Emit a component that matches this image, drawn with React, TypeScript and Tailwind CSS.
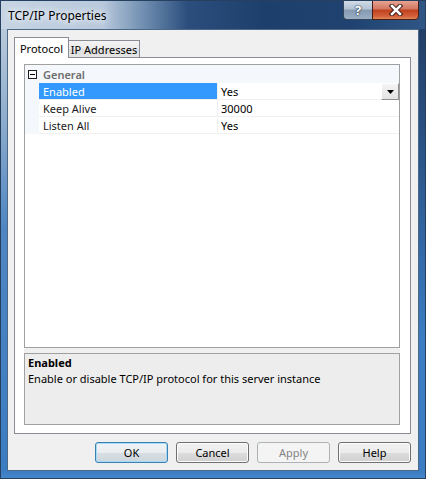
import React from "react";

const rows = [
  { name: "Enabled", value: "Yes", selected: true },
  { name: "Keep Alive", value: "30000", selected: false },
  { name: "Listen All", value: "Yes", selected: false },
];

const buttons = [
  { label: "OK", kind: "default" },
  { label: "Cancel", kind: "normal" },
  { label: "Apply", kind: "disabled" },
  { label: "Help", kind: "normal" },
];

function DialogButton({ label, kind }: { label: string; kind: string }) {
  if (kind === "disabled") {
    return (
      <div className="w-[73px] h-[21px] rounded-[3px] border border-[#adb2b5] bg-[#f4f4f4] flex items-center justify-center text-[#838383]">
        {label}
      </div>
    );
  }
  if (kind === "default") {
    return (
      <div className="w-[73px] h-[21px] rounded-[3px] border border-[#3c7fb1] shadow-[inset_0_0_0_1px_#a4dcf8] bg-[linear-gradient(180deg,#f1f4f6_0%,#e9edf0_50%,#d8dfe4_51%,#cdd6dc_100%)] flex items-center justify-center">
        {label}
      </div>
    );
  }
  return (
    <div className="w-[73px] h-[21px] rounded-[3px] border border-[#707070] shadow-[inset_0_0_0_1px_#fcfcfc] bg-[linear-gradient(180deg,#f2f2f2_0%,#ebebeb_50%,#dddddd_51%,#cfcfcf_100%)] flex items-center justify-center">
      {label}
    </div>
  );
}

export default function App() {
  return (
    <div className="w-[426px] h-[479px] flex flex-col border border-[#26415f] bg-[#3b7cc2] font-['Noto_Sans',sans-serif] text-[11px] leading-[15px] text-black overflow-hidden">
      {/* Title bar */}
      <div className="h-[28px] flex items-start bg-[linear-gradient(90deg,#c6d4e3_0%,#b8c9dc_24%,#6d8caf_34%,#2b4e7d_44%,#1d3f6b_62%,#1f4270_82%,#2f5685_100%)]">
        <span className="pl-[7px] pt-[7px] text-[12px] whitespace-nowrap [text-shadow:0_0_6px_#ffffff,0_0_10px_#ffffff]">
          TCP/IP Properties
        </span>
        <div className="ml-auto mr-[6px] flex -mt-px">
          <div className="w-[29px] h-[20px] rounded-bl-[4px] border border-[#34465c] border-r-0 bg-[linear-gradient(180deg,#d0dbe7_0%,#b2c2d4_45%,#8599b1_50%,#9aaec4_100%)] flex items-center justify-center">
            <span className="font-bold text-[13px] text-white [text-shadow:0_0_2px_#1d2a3a,0_0_1px_#1d2a3a]">?</span>
          </div>
          <div className="w-[47px] h-[20px] rounded-br-[4px] border border-[#4a1d14] bg-[linear-gradient(180deg,#e6a493_0%,#d27660_45%,#c0401f_50%,#d4613a_85%,#e08a5a_100%)] flex items-center justify-center">
            <svg width="14" height="12" viewBox="0 0 14 12">
              <path d="M3 2 L11 10 M11 2 L3 10" stroke="#3b1a12" strokeWidth="4.5" strokeLinecap="square" />
              <path d="M3 2 L11 10 M11 2 L3 10" stroke="#ffffff" strokeWidth="2.6" strokeLinecap="square" />
            </svg>
          </div>
        </div>
      </div>

      {/* Body */}
      <div className="flex-1 flex">
        <div className="w-[6px] bg-[linear-gradient(180deg,#b9cadc_0%,#8fadcd_20%,#4f86c2_45%,#3b7cc2_100%)]" />

        {/* Client area */}
        <div className="flex-1 flex flex-col border border-[#4b6886] bg-[#f0f0f0]">
          {/* Tabs */}
          <div className="pt-[7px] pl-[6px] pr-[7px] flex items-end h-[27px]">
            <div className="relative z-10 -mb-px w-[55px] h-[21px] border border-b-0 border-[#898c95] bg-white flex items-start justify-center pt-[3px] whitespace-nowrap">
              Protocol
            </div>
            <div className="w-[71px] h-[17px] border border-b-0 border-l-0 border-[#898c95] bg-[linear-gradient(180deg,#f3f3f3_0%,#ebebeb_50%,#dedede_51%,#e4e4e4_100%)] flex items-start justify-center pt-[1px] whitespace-nowrap">
              IP Addresses
            </div>
          </div>

          {/* Tab panel */}
          <div className="ml-[6px] mr-[7px] h-[377px] border border-[#898c95] bg-white pt-[6px] pl-[9px] pr-[10px] pb-[8px] flex flex-col">
            {/* Property grid */}
            <div className="flex-1 flex flex-col bg-[#f0f0f0]">
              <div className="h-[284px] border border-[#a0a0a0] bg-white flex flex-col">
                {/* Category */}
                <div className="h-[18px] flex items-center bg-[#f4f7fc]">
                  <div className="w-[14px] flex justify-center pl-px">
                    <div className="w-[9px] h-[9px] border border-[#1e1e1e] bg-white flex items-center justify-center">
                      <div className="w-[5px] h-px bg-black" />
                    </div>
                  </div>
                  <span className="pl-[4px] font-semibold text-[#6d6d6d]">General</span>
                </div>
                {rows.map((r) => (
                  <div key={r.name} className="h-[17px] flex">
                    <div className="w-[14px] bg-[#f4f7fc]" />
                    <div
                      className={
                        r.selected
                          ? "w-[178px] border-b border-[#f0f0f0] bg-[#3399ff] text-white pl-[4px] flex items-center"
                          : "w-[178px] border-b border-[#f0f0f0] pl-[4px] flex items-center"
                      }
                    >
                      <span className={r.selected ? "" : "text-[#1a1a1a]"}>{r.name}</span>
                    </div>
                    <div className="w-px bg-[#f0f0f0]" />
                    <div className="flex-1 border-b border-[#f0f0f0] pl-[3px] flex items-center">
                      <span>{r.value}</span>
                      {r.selected && (
                        <div className="ml-auto w-[18px] h-[17px] -mb-px border border-t-white border-l-white border-r-[#8e8f8f] border-b-[#8e8f8f] bg-[linear-gradient(180deg,#f4f4f4_0%,#e3e3e3_100%)] flex items-center justify-center">
                          <svg width="7" height="4" viewBox="0 0 7 4">
                            <path d="M0 0 H7 L3.5 4 Z" fill="#000000" />
                          </svg>
                        </div>
                      )}
                    </div>
                  </div>
                ))}
              </div>

              {/* Help pane */}
              <div className="mt-[5px] flex-1 border border-[#a0a0a0] bg-[#ededed] pl-[3px] pt-[1px]">
                <div className="font-bold leading-[16px]">Enabled</div>
                <div>Enable or disable TCP/IP protocol for this server instance</div>
              </div>
            </div>
          </div>

          {/* Buttons */}
          <div className="mt-[8px] pr-[7px] flex justify-end gap-[8px]">
            {buttons.map((b) => (
              <DialogButton key={b.label} label={b.label} kind={b.kind} />
            ))}
          </div>
        </div>

        <div className="w-[6px] bg-[linear-gradient(180deg,#223f66_0%,#2c568a_30%,#3b7cc2_70%,#3b7cc2_100%)]" />
      </div>
      <div className="h-[7px] bg-[linear-gradient(180deg,#3b7cc2_0%,#4686cb_100%)]" />
    </div>
  );
}
